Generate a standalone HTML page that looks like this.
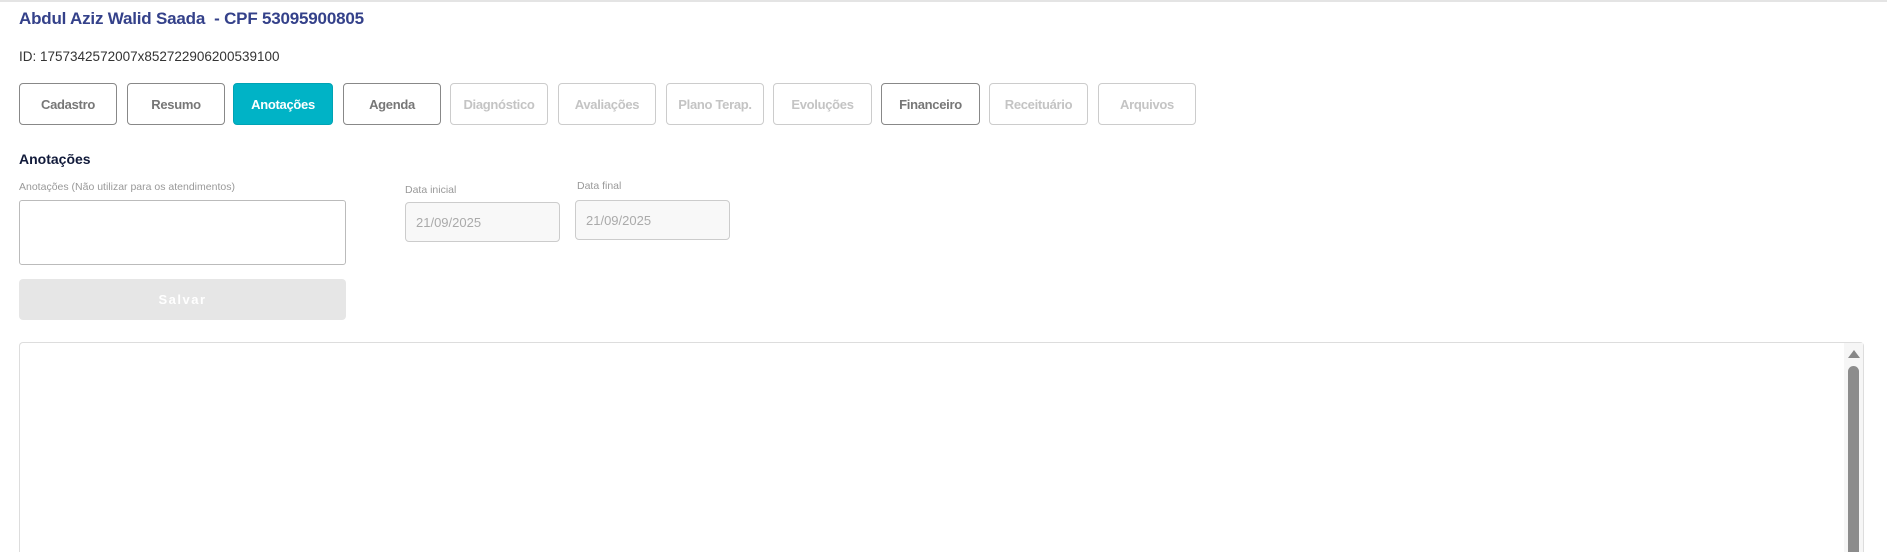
<!DOCTYPE html>
<html><head><meta charset="utf-8"><style>
*{box-sizing:border-box;margin:0;padding:0}
html,body{width:1887px;height:552px;overflow:hidden;background:#fff}
body{font-family:"Liberation Sans",sans-serif;position:relative}
.a{position:absolute}
.topline{left:0;top:0;width:1887px;height:2px;background:#e4e4e4}
.title{left:19px;top:9px;font-size:17px;font-weight:bold;color:#34418a;white-space:pre;letter-spacing:-0.2px}
.id{left:19px;top:49px;font-size:13.5px;color:#333}
.btn{top:83px;width:98px;height:42px;border:1px solid #888;border-radius:4px;font-size:13px;font-weight:bold;color:#777;display:flex;align-items:center;justify-content:center;letter-spacing:-0.3px}
.dis{border-color:#ccc;color:#c4c4c4}
.act{background:#00b3c6;border-color:#00a3b4;color:#fff}
.h{left:19px;top:151px;font-size:14px;font-weight:bold;color:#111a3a}
.lab{font-size:10.5px;color:#999}
.inp{border:1px solid #ccc;border-radius:4px;background:#f8f8f8;font-size:13px;color:#aaa;padding-left:10px;display:flex;align-items:center}
</style></head><body>
<div class="a topline"></div>
<div class="a title">Abdul Aziz Walid Saada  - CPF 53095900805</div>
<div class="a id">ID: 1757342572007x852722906200539100</div>
<div class="a btn" style="left:19px">Cadastro</div>
<div class="a btn" style="left:127px">Resumo</div>
<div class="a btn act" style="left:233px;width:100px">Anotações</div>
<div class="a btn" style="left:343px">Agenda</div>
<div class="a btn dis" style="left:450px">Diagnóstico</div>
<div class="a btn dis" style="left:558px">Avaliações</div>
<div class="a btn dis" style="left:666px">Plano Terap.</div>
<div class="a btn dis" style="left:773px;width:99px">Evoluções</div>
<div class="a btn" style="left:881px;width:99px">Financeiro</div>
<div class="a btn dis" style="left:989px;width:99px">Receituário</div>
<div class="a btn dis" style="left:1098px">Arquivos</div>
<div class="a h">Anotações</div>
<div class="a lab" style="left:19px;top:181px">Anotações (Não utilizar para os atendimentos)</div>
<div class="a" style="left:19px;top:200px;width:327px;height:65px;border:1px solid #bbb;border-radius:3px"></div>
<div class="a" style="left:19px;top:279px;width:327px;height:41px;background:#e6e6e6;border-radius:4px;color:#fff;font-weight:bold;font-size:13px;letter-spacing:1.5px;display:flex;align-items:center;justify-content:center">Salvar</div>
<div class="a lab" style="left:405px;top:184px">Data inicial</div>
<div class="a inp" style="left:405px;top:202px;width:155px;height:40px">21/09/2025</div>
<div class="a lab" style="left:577px;top:180px">Data final</div>
<div class="a inp" style="left:575px;top:200px;width:155px;height:40px">21/09/2025</div>
<div class="a" style="left:19px;top:342px;width:1845px;height:210px;border:1px solid #ddd;border-bottom:none;border-radius:4px 4px 0 0"></div>
<div class="a" style="left:1844px;top:343px;width:19px;height:209px;background:#f6f6f6"></div>
<div class="a" style="left:1848px;top:350px;width:0;height:0;border-left:6px solid transparent;border-right:6px solid transparent;border-bottom:8px solid #888"></div>
<div class="a" style="left:1848px;top:366px;width:11px;height:186px;background:#8c8c8c;border-radius:6px 6px 0 0"></div>
</body></html>
